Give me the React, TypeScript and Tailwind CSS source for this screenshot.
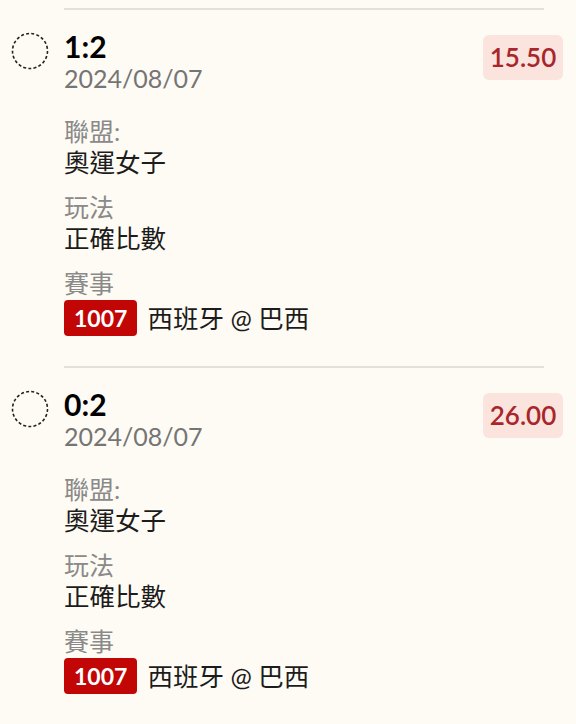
import React from "react";

const FONT = { fontFamily: 'Lato, "Noto Sans CJK TC", sans-serif' };

function DashedCircle() {
  return (
    <svg width="38" height="38" viewBox="0 0 38 38" className="shrink-0">
      <circle cx="19" cy="19" r="17.5" fill="none" stroke="#222" strokeWidth="1.6" strokeDasharray="3 2.2" />
    </svg>
  );
}

function Field({ label, children }: { label: string; children: React.ReactNode }) {
  return (
    <div className="flex flex-col">
      <div className="text-[25px] leading-[30px] text-[#8a8a8a]">{label}</div>
      <div className="text-[25.5px] leading-[32px] text-[#1c1c1c]">{children}</div>
    </div>
  );
}

function Bet({ score, odds }: { score: string; odds: string }) {
  return (
    <div className="flex flex-col pb-[30px]">
      <div className="ml-[64px] w-[480px] h-[2px] bg-[#e3e0d8]" />
      <div className="flex items-start pl-[11px] pr-[13px] pt-[15px]">
        <div className="pt-[7px]">
          <DashedCircle />
        </div>
        <div className="flex-1 ml-[15px] flex flex-col">
          <div className="text-[30px] leading-[33px] font-bold text-black pt-[5px]">{score}</div>
          <div className="text-[25px] leading-[30px] text-[#757575]">2024/08/07</div>
          <div className="flex flex-col gap-[14px] mt-[23px]">
            <Field label="聯盟:">奧運女子</Field>
            <Field label="玩法">正確比數</Field>
            <div className="flex flex-col">
              <div className="text-[25px] leading-[30px] text-[#8a8a8a]">賽事</div>
              <div className="flex items-center mt-[2px]">
                <span className="bg-[#c20606] text-white font-bold text-[23px] leading-[36px] h-[36px] px-[10px] rounded-[4px]">1007</span>
                <span className="ml-[10px] text-[25.5px] leading-[32px] text-[#1c1c1c]">西班牙 @ 巴西</span>
              </div>
            </div>
          </div>
        </div>
        <div className="mt-[10px] w-[80px] h-[45px] rounded-[6px] bg-[#fbe4de] flex items-center justify-center text-[26px] font-semibold text-[#a8262b]">
          {odds}
        </div>
      </div>
    </div>
  );
}

export default function App() {
  return (
    <div className="min-h-screen bg-[#fefbf4] pt-[8px]" style={FONT}>
      <Bet score="1:2" odds="15.50" />
      <Bet score="0:2" odds="26.00" />
    </div>
  );
}
